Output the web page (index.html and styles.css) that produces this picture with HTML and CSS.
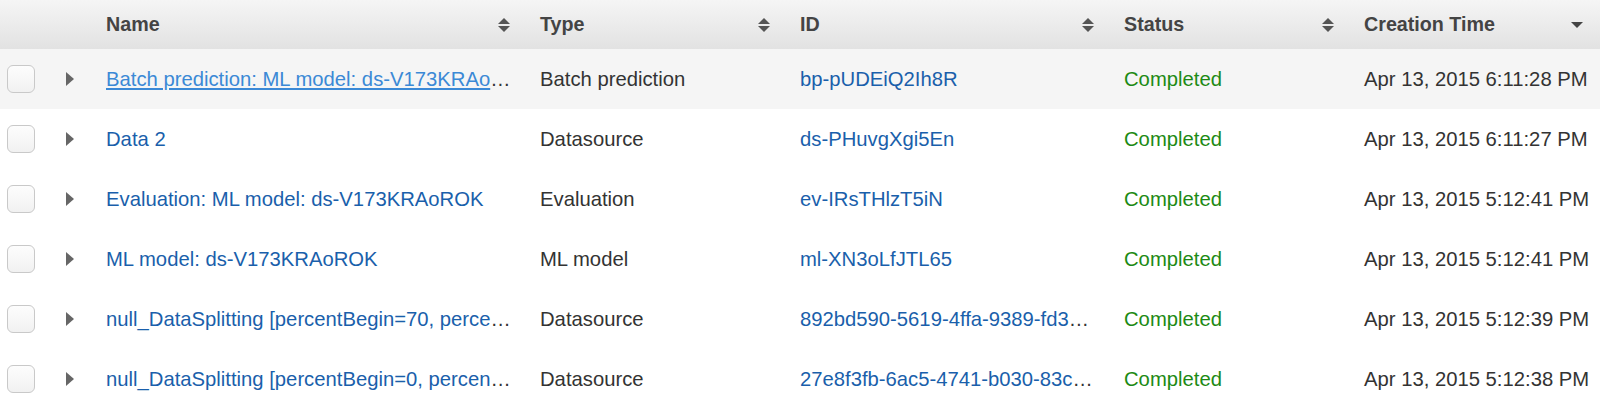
FILE: index.html
```html
<!DOCTYPE html>
<html lang="en">
<head>
    <meta charset="UTF-8">
    <title>Entities</title>
    <link rel="stylesheet" href="styles.css">
</head>
<body>
    <table class="grid">
        <colgroup>
            <col class="c-check">
            <col class="c-expand">
            <col class="c-name">
            <col class="c-type">
            <col class="c-id">
            <col class="c-status">
            <col class="c-time">
        </colgroup>
        <thead>
            <tr>
                <th></th>
                <th></th>
                <th><div class="th-in"><span>Name</span><span class="sort"></span></div></th>
                <th><div class="th-in"><span>Type</span><span class="sort"></span></div></th>
                <th><div class="th-in"><span>ID</span><span class="sort"></span></div></th>
                <th><div class="th-in"><span>Status</span><span class="sort"></span></div></th>
                <th class="last"><div class="th-in"><span>Creation Time</span><span class="caret"></span></div></th>
            </tr>
        </thead>
        <tbody>
            <tr class="active">
                <td><span class="check"></span></td>
                <td><span class="expand"></span></td>
                <td class="name"><a href="#" class="hover">Batch prediction: ML model: ds-V173KRAoROK</a></td>
                <td>Batch prediction</td>
                <td><a href="#">bp-pUDEiQ2Ih8R</a></td>
                <td class="ok">Completed</td>
                <td class="last">Apr 13, 2015 6:11:28 PM</td>
            </tr>
            <tr>
                <td><span class="check"></span></td>
                <td><span class="expand"></span></td>
                <td class="name"><a href="#">Data 2</a></td>
                <td>Datasource</td>
                <td><a href="#">ds-PHuvgXgi5En</a></td>
                <td class="ok">Completed</td>
                <td class="last">Apr 13, 2015 6:11:27 PM</td>
            </tr>
            <tr>
                <td><span class="check"></span></td>
                <td><span class="expand"></span></td>
                <td class="name"><a href="#">Evaluation: ML model: ds-V173KRAoROK</a></td>
                <td>Evaluation</td>
                <td><a href="#">ev-IRsTHlzT5iN</a></td>
                <td class="ok">Completed</td>
                <td class="last">Apr 13, 2015 5:12:41 PM</td>
            </tr>
            <tr>
                <td><span class="check"></span></td>
                <td><span class="expand"></span></td>
                <td class="name"><a href="#">ML model: ds-V173KRAoROK</a></td>
                <td>ML model</td>
                <td><a href="#">ml-XN3oLfJTL65</a></td>
                <td class="ok">Completed</td>
                <td class="last">Apr 13, 2015 5:12:41 PM</td>
            </tr>
            <tr>
                <td><span class="check"></span></td>
                <td><span class="expand"></span></td>
                <td class="name"><a href="#">null_DataSplitting [percentBegin=70, percentEnd=100]</a></td>
                <td>Datasource</td>
                <td><a href="#">892bd590-5619-4ffa-9389-fd3a1b2c4d5e</a></td>
                <td class="ok">Completed</td>
                <td class="last">Apr 13, 2015 5:12:39 PM</td>
            </tr>
            <tr>
                <td><span class="check"></span></td>
                <td><span class="expand"></span></td>
                <td class="name"><a href="#">null_DataSplitting [percentBegin=0, percentEnd=70]</a></td>
                <td>Datasource</td>
                <td><a href="#">27e8f3fb-6ac5-4741-b030-83c9d2e1f0a7</a></td>
                <td class="ok">Completed</td>
                <td class="last">Apr 13, 2015 5:12:38 PM</td>
            </tr>
        </tbody>
    </table>
</body>
</html>
```

FILE: styles.css
```css
/* Tabla de entidades */
body {
    margin: 0;
    background: #fff;
    font-family: "Liberation Sans", Arial, Helvetica, sans-serif;
    font-size: 20.25px;
    color: #333;
}

.grid {
    width: 1600px;
    border-collapse: collapse;
    table-layout: fixed;
}

.c-check { width: 50px; }
.c-expand { width: 40px; }
.c-name { width: 434px; }
.c-type { width: 260px; }
.c-id { width: 324px; }
.c-status { width: 240px; }
.c-time { width: 252px; }

th {
    height: 49px;
    padding: 0 14px 0 16px;
    background: linear-gradient(#f5f5f5, #e2e2e2);
    color: #444;
    font-size: 19.7px;
    font-weight: bold;
    text-align: left;
}

th.last,
td.last { padding-right: 4px; }

.th-in {
    display: flex;
    align-items: center;
    justify-content: space-between;
}

/* Iconos de orden */
.sort {
    width: 12px;
    height: 14px;
    display: flex;
    flex-direction: column;
    justify-content: space-between;
}

.sort::before,
.sort::after {
    content: "";
    border-left: 6px solid transparent;
    border-right: 6px solid transparent;
}

.sort::before { border-bottom: 6px solid #555; }
.sort::after { border-top: 6px solid #555; }

.caret {
    margin-right: 13px;
    border-left: 6px solid transparent;
    border-right: 6px solid transparent;
    border-top: 6px solid #444;
}

td {
    height: 60px;
    padding: 0 14px 0 16px;
    white-space: nowrap;
    overflow: hidden;
    text-overflow: ellipsis;
}

td:first-child { padding: 0 0 0 7px; }

td.name { padding-right: 8px; }

tr.active td { background: #f5f5f5; }

a {
    color: #1a5fab;
    text-decoration: none;
}

a.hover {
    color: #3b89d6;
    text-decoration: underline;
}

.ok { color: #1d8a14; }

.check {
    display: block;
    width: 26px;
    height: 26px;
    border: 1px solid #c9c9c9;
    border-radius: 6px;
    background: linear-gradient(#fdfdfd, #f1f1f1);
}

.expand {
    display: block;
    width: 0;
    height: 0;
    border-top: 7px solid transparent;
    border-bottom: 7px solid transparent;
    border-left: 8px solid #666;
}
```
